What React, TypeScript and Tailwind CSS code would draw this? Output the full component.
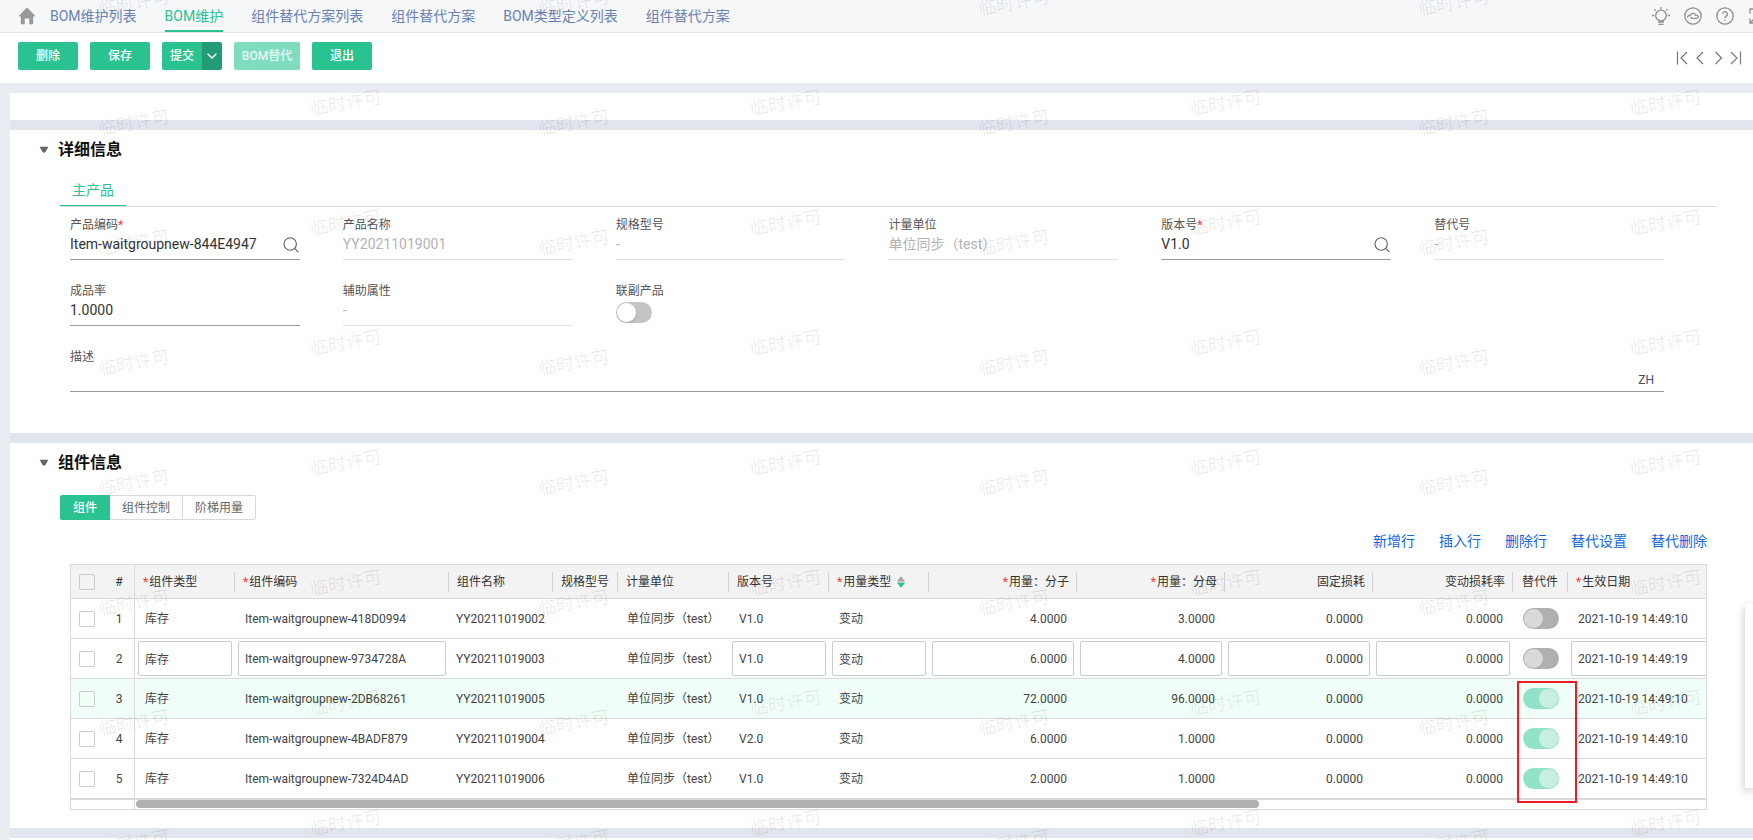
import React from "react";

const tabs = [
  { name: "BOM维护列表" },
  { name: "BOM维护", active: true },
  { name: "组件替代方案列表" },
  { name: "组件替代方案" },
  { name: "BOM类型定义列表" },
  { name: "组件替代方案" },
];

type FieldProps = {
  id: string;
  label: string;
  value: string;
  required?: boolean;
  disabled?: boolean;
  search?: boolean;
};

const fields: FieldProps[] = [
  { id: "code", label: "产品编码", value: "Item-waitgroupnew-844E4947", required: true, search: true },
  { id: "name", label: "产品名称", value: "YY20211019001", disabled: true },
  { id: "spec", label: "规格型号", value: "-", disabled: true },
  { id: "unit", label: "计量单位", value: "单位同步（test）", disabled: true },
  { id: "version", label: "版本号", value: "V1.0", required: true, search: true },
  { id: "alt", label: "替代号", value: "-", disabled: true },
  { id: "yield", label: "成品率", value: "1.0000" },
  { id: "aux", label: "辅助属性", value: "-", disabled: true },
];

type Column = {
  key: string;
  title: string;
  width?: string;
  required?: boolean;
  align?: "right" | "center";
  editable?: boolean;
  sort?: boolean;
  last?: boolean;
};

const columns: Column[] = [
  { key: "type", title: "组件类型", width: "w-[100px]", required: true, editable: true },
  { key: "code", title: "组件编码", width: "w-[214px]", required: true, editable: true },
  { key: "name", title: "组件名称", width: "w-[104px]" },
  { key: "spec", title: "规格型号", width: "w-[65px]" },
  { key: "unit", title: "计量单位", width: "w-[111px]" },
  { key: "version", title: "版本号", width: "w-[100px]", editable: true },
  { key: "usage", title: "用量类型", width: "w-[100px]", required: true, editable: true, sort: true },
  { key: "num", title: "用量：分子", width: "w-[148px]", required: true, align: "right", editable: true },
  { key: "den", title: "用量：分母", width: "w-[148px]", required: true, align: "right", editable: true },
  { key: "fixed", title: "固定损耗", width: "w-[148px]", align: "right", editable: true },
  { key: "varying", title: "变动损耗率", width: "w-[140px]", align: "right", editable: true },
  { key: "sub", title: "替代件", width: "w-[55px]", align: "center" },
  { key: "date", title: "生效日期", required: true, editable: true, last: true },
];

const makeRow = (code: string, name: string, version: string, num: string, den: string, sub: boolean, date: string) => ({
  type: "库存",
  code,
  name,
  spec: "",
  unit: "单位同步（test）",
  version,
  usage: "变动",
  num,
  den,
  fixed: "0.0000",
  varying: "0.0000",
  sub,
  date,
});

const rows = [
  makeRow("Item-waitgroupnew-418D0994", "YY20211019002", "V1.0", "4.0000", "3.0000", false, "2021-10-19 14:49:10"),
  makeRow("Item-waitgroupnew-9734728A", "YY20211019003", "V1.0", "6.0000", "4.0000", false, "2021-10-19 14:49:19"),
  makeRow("Item-waitgroupnew-2DB68261", "YY20211019005", "V1.0", "72.0000", "96.0000", true, "2021-10-19 14:49:10"),
  makeRow("Item-waitgroupnew-4BADF879", "YY20211019004", "V2.0", "6.0000", "1.0000", true, "2021-10-19 14:49:10"),
  makeRow("Item-waitgroupnew-7324D4AD", "YY20211019006", "V1.0", "2.0000", "1.0000", true, "2021-10-19 14:49:10"),
];

const EDITING_ROW = 1;
const HOVERED_ROW = 2;

function HomeIcon() {
  return (
    <svg width="18" height="18" viewBox="0 0 18 18" fill="#999" aria-hidden="true">
      <path d="M9 0.5 17.6 9.2H15.2V16.2Q15.2 17.2 14.2 17.2H11.2V11.6H6.8V17.2H3.8Q2.8 17.2 2.8 16.2V9.2H0.4Z" />
    </svg>
  );
}

function BulbIcon() {
  return (
    <svg width="20" height="20" viewBox="0 0 20 20" fill="none" stroke="#8f8f8f" strokeWidth="1.3" aria-hidden="true">
      <circle cx="10" cy="9.5" r="5.3" />
      <path d="M10 1v2M3.4 3.2l1.3 1.3M16.6 3.2l-1.3 1.3M1 9.500h2.2M16.8 9.500H19M7 16h6M7.500 18.4h5" />
    </svg>
  );
}

function CloudIcon() {
  return (
    <svg width="20" height="20" viewBox="0 0 20 20" fill="none" stroke="#8f8f8f" strokeWidth="1.3" aria-hidden="true">
      <circle cx="10" cy="10" r="8.2" />
      <path d="M4.800 11.800C4.200 9.800 6.200 8.900 7.200 9.600 7.700 6.900 11.900 6.500 12.600 9.300 14.400 8.900 15.800 10.200 15.300 11.300Q14.900 12.300 13.600 12.300H9.200Q8 12.300 7.600 11.200" />
    </svg>
  );
}

function HelpIcon() {
  return (
    <svg width="20" height="20" viewBox="0 0 20 20" fill="none" stroke="#8f8f8f" strokeWidth="1.3" aria-hidden="true">
      <circle cx="10" cy="10" r="8.2" />
      <path d="M7.6 8a2.4 2.4 0 1 1 3.4 2.2q-1 .5-1 1.6v.4M10 13.4v1.4" />
    </svg>
  );
}

function ExpandIcon() {
  return (
    <svg width="16" height="16" viewBox="0 0 16 16" fill="none" stroke="#8f8f8f" strokeWidth="1.3" aria-hidden="true">
      <path d="M1 5.5V1h4.5M10.5 1H15v4.5M15 10.5V15h-4.5M5.5 15H1v-4.5M1 15l4-4" />
    </svg>
  );
}

function PagerIcon({ d }: { d: string }) {
  return (
    <svg width="12" height="14" viewBox="0 0 12 14" fill="none" stroke="#777" strokeWidth="1.2" aria-hidden="true">
      <path d={d} />
    </svg>
  );
}

function SearchIcon() {
  return (
    <svg width="16" height="16" viewBox="0 0 16 16" fill="none" stroke="#56606f" strokeWidth="1.1" aria-hidden="true">
      <circle cx="7.2" cy="7" r="6.2" />
      <path d="m11.6 11.4 3.8 3.8" />
    </svg>
  );
}

function Triangle() {
  return (
    <svg width="10" height="8" viewBox="0 0 10 8" fill="#666" aria-hidden="true">
      <path d="M0.6 0.8H9.4L6.6 5.8Q5 7.8 3.4 5.8Z" />
    </svg>
  );
}

function SortIcon() {
  return (
    <svg width="8" height="12" viewBox="0 0 8 12" aria-hidden="true">
      <path d="M0 5.400 3.2 0.900Q4 0.1 4.8 0.900L8 5.400Z" fill="#a6a6a6" />
      <path d="M0 6.600 3.2 11.100Q4 11.900 4.8 11.100L8 6.600Z" fill="#2bc292" />
    </svg>
  );
}

function Field({ id, label, value, required, disabled, search }: FieldProps) {
  return (
    <div className="flex flex-col">
      <label htmlFor={id} className="h-4 text-xs leading-4 text-[#555]">
        {label}
        {required && <span className="text-[#ff3b3b]">*</span>}
      </label>
      <div className={`flex h-[27px] items-start border-b pt-px ${disabled ? "border-[#e2e2e2]" : "border-[#999]"}`}>
        <input
          id={id}
          type="text"
          defaultValue={value}
          disabled={disabled}
          className="h-5 w-full min-w-0 flex-1 bg-transparent text-sm leading-5 text-[#333] outline-none disabled:text-[#b3b3b3]"
        />
        {search && (
          <button type="button" aria-label={`查找${label}`} className="mt-[3px] mr-px">
            <SearchIcon />
          </button>
        )}
      </div>
    </div>
  );
}

function TableSwitch({ on, label }: { on: boolean; label: string }) {
  return (
    <input
      type="checkbox"
      role="switch"
      aria-label={label}
      defaultChecked={on}
      className="block h-[21px] w-9 appearance-none rounded-full bg-[#b0b0b0] p-px before:block before:size-[19px] before:rounded-full before:bg-[#d9d9d9] checked:bg-[#92e2c9] checked:before:ml-[15px] checked:before:bg-[#c8efe2]"
    />
  );
}

function Tick({ label }: { label: string }) {
  return (
    <input
      type="checkbox"
      aria-label={label}
      className="block size-4 appearance-none rounded-xs border border-[#ccc] bg-transparent"
    />
  );
}

function SectionTitle({ children }: { children: React.ReactNode }) {
  return (
    <h2 className="flex h-10 items-center gap-[9px] pl-[29px] text-base leading-6 font-bold text-[#111]">
      <Triangle />
      {children}
    </h2>
  );
}

function Watermark() {
  return (
    <div
      aria-hidden="true"
      className="pointer-events-none absolute inset-x-0 -top-[60px] bottom-0 z-20 grid auto-rows-[120px] grid-cols-[repeat(4,440px)] overflow-hidden text-lg leading-6 font-light text-black/12 select-none"
    >
      {Array.from({ length: 32 }, (_, i) => (
        <div key={i} className="flex items-start gap-[140px] pl-[98px]">
          <span className="mt-[51px] w-[72px] -rotate-[10deg]">临时许可</span>
          <span className="mt-[31px] w-[72px] -rotate-[10deg]">临时许可</span>
        </div>
      ))}
    </div>
  );
}

function ComponentTable() {
  return (
    <div className="border border-[#d9d9d9]">
      <table className="w-full table-fixed border-separate border-spacing-0 text-xs leading-4 text-[#444]">
        <thead className="bg-[#f3f3f3] text-[#333]">
          <tr className="h-[34px]">
            <th className="w-16 border-r border-b border-[#d9d9d9] p-0 font-normal">
              <div className="flex items-center pl-2">
                <Tick label="全选" />
                <span className="ml-4 w-4 text-center">#</span>
              </div>
            </th>
            {columns.map((c) => (
              <th key={c.key} className={`${c.width ?? ""} border-b border-[#d9d9d9] p-0 font-normal`}>
                <div
                  className={`flex h-5 items-center whitespace-nowrap ${c.last ? "" : "border-r border-[#d0d0d0]"} ${
                    c.align === "right" ? "justify-end pr-[7px]" : c.align === "center" ? "justify-center" : "pl-2"
                  }`}
                >
                  {c.required && <span className="mr-px text-[#ff3b3b]">*</span>}
                  {c.title}
                  {c.sort && (
                    <span className="ml-1.5">
                      <SortIcon />
                    </span>
                  )}
                </div>
              </th>
            ))}
          </tr>
        </thead>
        <tbody>
          {rows.map((row, r) => (
            <tr key={row.code} className={r === HOVERED_ROW ? "h-10 bg-[#f0fff8]" : "h-10"}>
              <td className="border-r border-b border-[#d9d9d9] p-0">
                <div className="flex items-center pl-2">
                  <Tick label={`选择第${r + 1}行`} />
                  <span className="ml-4 w-4 text-center">{r + 1}</span>
                </div>
              </td>
              {columns.map((c) => {
                const value = row[c.key as keyof typeof row];
                if (c.key === "sub") {
                  return (
                    <td key={c.key} className="relative border-b border-[#d9d9d9] p-0 pl-2.5">
                      <TableSwitch on={row.sub} label={`第${r + 1}行替代件`} />
                      {r === HOVERED_ROW && (
                        <div className="pointer-events-none absolute top-0.5 left-1 z-10 h-[122px] w-[60px] border-2 border-[#ee1c25]" />
                      )}
                    </td>
                  );
                }
                if (r === EDITING_ROW && c.editable) {
                  return (
                    <td key={c.key} className={`border-b border-[#d9d9d9] p-0 pl-[3px] ${c.last ? "" : "pr-[3px]"}`}>
                      <input
                        type="text"
                        aria-label={c.title}
                        defaultValue={String(value)}
                        className={`block h-[35px] w-full border border-[#ccc] bg-white px-1.5 outline-none ${
                          c.last ? "rounded-l-xs border-r-0" : "rounded-xs"
                        } ${c.align === "right" ? "text-right" : ""}`}
                      />
                    </td>
                  );
                }
                return (
                  <td
                    key={c.key}
                    className={`border-b border-[#d9d9d9] p-0 whitespace-nowrap ${
                      c.align === "right" ? "pr-2.5 text-right" : c.key === "name" ? "pl-[7px]" : c.key === "unit" ? "pl-[9px]" : "pl-2.5"
                    }`}
                  >
                    {value}
                  </td>
                );
              })}
            </tr>
          ))}
        </tbody>
      </table>
      <div className="flex h-2.5 border-t border-[#d9d9d9]">
        <div className="w-16 border-r border-[#d9d9d9]" />
        <div className="flex-1 pl-px">
          <div className="h-2 w-[71.5%] rounded-full bg-[#b0b0b0]" />
        </div>
      </div>
    </div>
  );
}

export default function App() {
  return (
    <div className="relative flex min-h-screen flex-col overflow-hidden bg-white font-['Roboto','Noto_Sans_CJK_SC',sans-serif]">
      <Watermark />

      <header className="flex h-[33px] items-center justify-between border-b border-[#dfe1e3] bg-[#f5f7f9]">
        <nav className="flex h-full items-center gap-7 pl-[18px] text-sm leading-5 text-[#6a82b0]">
          <a href="#home" aria-label="首页" className="-mr-3.5">
            <HomeIcon />
          </a>
          {tabs.map((t, i) => (
            <a
              key={i}
              href={`#tab-${i}`}
              className={`flex h-full items-center border-b-2 pb-0.5 whitespace-nowrap ${
                t.active ? "border-[#2bc292] text-[#2bc292]" : "border-transparent"
              }`}
            >
              <span className="pt-1">{t.name}</span>
            </a>
          ))}
        </nav>
        <div className="-mr-3 flex items-center gap-3">
          <button type="button" aria-label="提示">
            <BulbIcon />
          </button>
          <button type="button" aria-label="云服务">
            <CloudIcon />
          </button>
          <button type="button" aria-label="帮助">
            <HelpIcon />
          </button>
          <button type="button" aria-label="全屏" className="ml-0.5">
            <ExpandIcon />
          </button>
        </div>
      </header>

      <div className="flex h-[50px] items-start justify-between pt-[9px] pr-[11px] pl-[18px]">
        <div className="flex gap-3 text-xs leading-4 font-medium text-white">
          <button type="button" className="h-7 w-[60px] rounded-xs bg-[#2bc292]">
            删除
          </button>
          <button type="button" className="h-7 w-[60px] rounded-xs bg-[#2bc292]">
            保存
          </button>
          <div className="flex overflow-hidden rounded-xs">
            <button type="button" className="h-7 w-10 bg-[#2bc292]">
              提交
            </button>
            <button type="button" aria-label="更多提交方式" className="flex h-7 w-5 items-center justify-center bg-[#239b75]">
              <svg width="10" height="8" viewBox="0 0 10 8" fill="none" stroke="white" strokeWidth="1.4" aria-hidden="true">
                <path d="m0.6 1.8 4.4 4.2 4.4-4.2" />
              </svg>
            </button>
          </div>
          <button type="button" disabled className="h-7 w-[66px] rounded-xs bg-[#80dcbf] text-white/80">
            BOM替代
          </button>
          <button type="button" className="h-7 w-[60px] rounded-xs bg-[#2bc292]">
            退出
          </button>
        </div>
        <div className="mt-[9px] flex gap-1.5">
          <button type="button" aria-label="第一条">
            <PagerIcon d="M1.5 0.5v13M11 1 5 7l6 6" />
          </button>
          <button type="button" aria-label="上一条">
            <PagerIcon d="M9 1 3 7l6 6" />
          </button>
          <button type="button" aria-label="下一条">
            <PagerIcon d="m3.5 1 6 6-6 6" />
          </button>
          <button type="button" aria-label="最后一条">
            <PagerIcon d="M10.5 0.5v13M1 1l6 6-6 6" />
          </button>
        </div>
      </div>

      <main className="flex flex-1 flex-col bg-[#e9edf2] pt-2.5 pl-2.5">
        <div className="flex flex-1 flex-col gap-2.5 bg-[#e1e5ee]">
          <div className="h-[27px] bg-white" />

          <section className="bg-white pb-[41px]">
            <SectionTitle>详细信息</SectionTitle>
            <div className="mr-9 ml-[50px] flex h-[37px] border-b border-[#d9d9d9]">
              <button type="button" className="w-[66px] border-b border-[#2bc292] pt-1 text-center text-sm leading-5 text-[#2bc292]">
                主产品
              </button>
            </div>
            <form className="mt-2.5 mr-[89px] ml-[60px] grid grid-cols-6 gap-x-[43px] gap-y-[23px]">
              {fields.map((f) => (
                <Field key={f.id} {...f} />
              ))}
              <div className="flex flex-col">
                <label htmlFor="joint" className="h-4 text-xs leading-4 text-[#555]">
                  联副产品
                </label>
                <input
                  id="joint"
                  type="checkbox"
                  role="switch"
                  className="mt-[3px] block h-[21px] w-9 appearance-none rounded-full bg-[#c4c4c4] p-px before:block before:size-[19px] before:rounded-full before:bg-white before:shadow-sm"
                />
              </div>
              <div className="col-span-6 flex flex-col">
                <label htmlFor="memo" className="h-4 text-xs leading-4 text-[#555]">
                  描述
                </label>
                <div className="flex h-[27px] items-center border-b border-[#999] pr-2.5">
                  <input id="memo" type="text" className="h-5 min-w-0 flex-1 bg-transparent text-sm outline-none" />
                  <span className="mt-1 text-xs leading-4 text-[#424e67]">ZH</span>
                </div>
              </div>
            </form>
          </section>

          <section className="bg-white pb-[18px]">
            <SectionTitle>组件信息</SectionTitle>
            <div className="mt-3 ml-[50px] flex h-[25px] text-xs leading-4 text-[#666]">
              <button type="button" className="w-[50px] rounded-l-xs bg-[#2bc292] font-medium text-white">
                组件
              </button>
              <button type="button" className="w-[73px] border-y border-r border-[#d9d9d9]">
                组件控制
              </button>
              <button type="button" className="w-[73px] rounded-r-xs border-y border-r border-[#d9d9d9]">
                阶梯用量
              </button>
            </div>
            <div className="mr-[46px] ml-[60px]">
              <div className="flex h-11 items-center justify-end gap-6 pb-0.5 text-sm leading-5 text-[#1666de]">
                <a href="#add-row">新增行</a>
                <a href="#insert-row">插入行</a>
                <a href="#delete-row">删除行</a>
                <a href="#set-substitute">替代设置</a>
                <a href="#delete-substitute">替代删除</a>
              </div>
              <ComponentTable />
            </div>
          </section>

          <div className="flex-1 bg-white" />
        </div>
      </main>

      <aside aria-label="侧边面板" className="absolute top-[604px] right-0 z-30 h-[184px] w-2 rounded-l-xs bg-white shadow-[0_3px_10px_rgba(0,0,0,0.25)]" />
    </div>
  );
}
